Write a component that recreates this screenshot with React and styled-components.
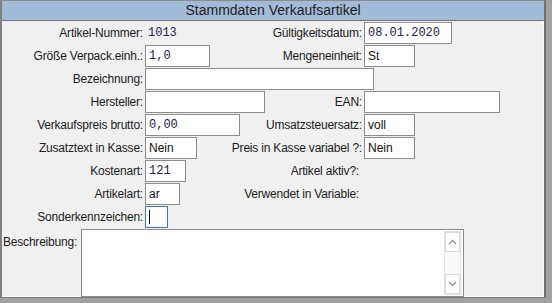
import React from "react";
import styled, { createGlobalStyle } from "styled-components";

const Global = createGlobalStyle`
  html, body { margin: 0; padding: 0; background: #a0a0a0; }
  body { width: 552px; height: 303px; overflow: hidden; }
`;

const Panel = styled.div`
  width: 542px;
  height: 296px;
  background: #f0f0f0;
  border-left: 2px solid #808080;
  border-right: 2px solid #6f6f6f;
  border-top: 1px solid #8a8a8a;
  border-bottom: 1px solid #7a7a7a;
  box-shadow: inset -1px -1px 0 #fafafa;
  font-family: "Liberation Sans", Arial, sans-serif;
  font-size: 12px;
  color: #1c1c1c;
  display: flex;
  flex-direction: column;
`;

const Title = styled.div`
  height: 19px;
  line-height: 19px;
  background: #a2bbd9;
  border-bottom: 1px solid #6b7585;
  text-align: center;
  font-size: 14px;
  color: #1e1e1e;
`;

const Form = styled.div`
  display: flex;
  flex-direction: column;
  gap: 1px;
  padding-top: 1px;
`;

const Row = styled.div`
  display: grid;
  grid-template-columns: 141px 1fr auto 180px;
  column-gap: 2px;
  height: 22px;
  align-items: center;
`;

const Label = styled.span`
  text-align: right;
  white-space: nowrap;
  letter-spacing: -0.2px;
  padding-right: ${(p) => p.$pad ?? 0}px;
`;

const Field = styled.div`
  box-sizing: border-box;
  height: 22px;
  width: ${(p) => p.$w}px;
  background: #fff;
  border: 1px solid ${(p) => (p.$focus ? "#3d78b8" : "#8c8c8c")};
  padding: 0 3px;
  display: flex;
  align-items: center;
  white-space: nowrap;
  font-family: ${(p) => (p.$mono ? '"Liberation Mono", "Courier New", monospace' : "inherit")};
  color: ${(p) => (p.$mono ? "#23204a" : "#111")};
  grid-column: ${(p) => p.$span ?? "auto"};
`;

const Plain = styled.span`
  padding-left: 3px;
  font-family: "Liberation Mono", "Courier New", monospace;
  color: #23204a;
`;

const Caret = styled.span`
  width: 1px;
  height: 14px;
  background: #111;
`;

const DescRow = styled.div`
  display: flex;
  align-items: flex-start;
`;

const DescLabel = styled.span`
  width: 78px;
  padding: 6px 0 0 1px;
  letter-spacing: -0.2px;
  white-space: nowrap;
`;

const TextArea = styled.div`
  box-sizing: border-box;
  width: 383px;
  height: 68px;
  background: #fff;
  border: 1px solid #8c8c8c;
  display: flex;
  justify-content: flex-end;
  padding: 1px 2px 1px 0;
`;

const Scroll = styled.div`
  width: 17px;
  display: flex;
  flex-direction: column;
  border: 1px solid #e0e0e0;
  box-sizing: border-box;
`;

const ScrollBtn = styled.div`
  height: 18px;
  display: flex;
  align-items: center;
  justify-content: center;
  border: 1px solid #dcdcdc;
  background: #fdfdfd;
`;

const Track = styled.div`
  flex: 1;
  background: #fafafa;
`;

const Arrow = ({ down }) => (
  <svg width="9" height="6" viewBox="0 0 9 6">
    <path d={down ? "M1 1 L4.5 4.5 L8 1" : "M1 5 L4.5 1.5 L8 5"} fill="none" stroke="#8a8a8a" strokeWidth="1.2" />
  </svg>
);

const Empty = () => <span />;

export default function App() {
  return (
    <>
      <Global />
      <Panel>
        <Title>Stammdaten Verkaufsartikel</Title>
        <Form>
          <Row>
            <Label>Artikel-Nummer:</Label>
            <Plain>1013</Plain>
            <Label>Gültigkeitsdatum:</Label>
            <Field $w={88} $mono>08.01.2020</Field>
          </Row>
          <Row>
            <Label>Größe Verpack.einh.:</Label>
            <Field $w={65} $mono>1,0</Field>
            <Label>Mengeneinheit:</Label>
            <Field $w={51}>St</Field>
          </Row>
          <Row>
            <Label>Bezeichnung:</Label>
            <Field $w={229} $span="2 / 4" />
            <Empty />
          </Row>
          <Row>
            <Label>Hersteller:</Label>
            <Field $w={120} />
            <Label>EAN:</Label>
            <Field $w={136} />
          </Row>
          <Row>
            <Label>Verkaufspreis brutto:</Label>
            <Field $w={95} $mono>0,00</Field>
            <Label>Umsatzsteuersatz:</Label>
            <Field $w={51}>voll</Field>
          </Row>
          <Row>
            <Label>Zusatztext in Kasse:</Label>
            <Field $w={52}>Nein</Field>
            <Label>Preis in Kasse variabel ?:</Label>
            <Field $w={51}>Nein</Field>
          </Row>
          <Row>
            <Label>Kostenart:</Label>
            <Field $w={41} $mono>121</Field>
            <Label $pad={3}>Artikel aktiv?:</Label>
            <Empty />
          </Row>
          <Row>
            <Label>Artikelart:</Label>
            <Field $w={35}>ar</Field>
            <Label $pad={3}>Verwendet in Variable:</Label>
            <Empty />
          </Row>
          <Row>
            <Label>Sonderkennzeichen:</Label>
            <Field $w={23} $focus><Caret /></Field>
            <Empty />
            <Empty />
          </Row>
          <DescRow>
            <DescLabel>Beschreibung:</DescLabel>
            <TextArea>
              <Scroll>
                <ScrollBtn><Arrow /></ScrollBtn>
                <Track />
                <ScrollBtn><Arrow down /></ScrollBtn>
              </Scroll>
            </TextArea>
          </DescRow>
        </Form>
      </Panel>
    </>
  );
}
